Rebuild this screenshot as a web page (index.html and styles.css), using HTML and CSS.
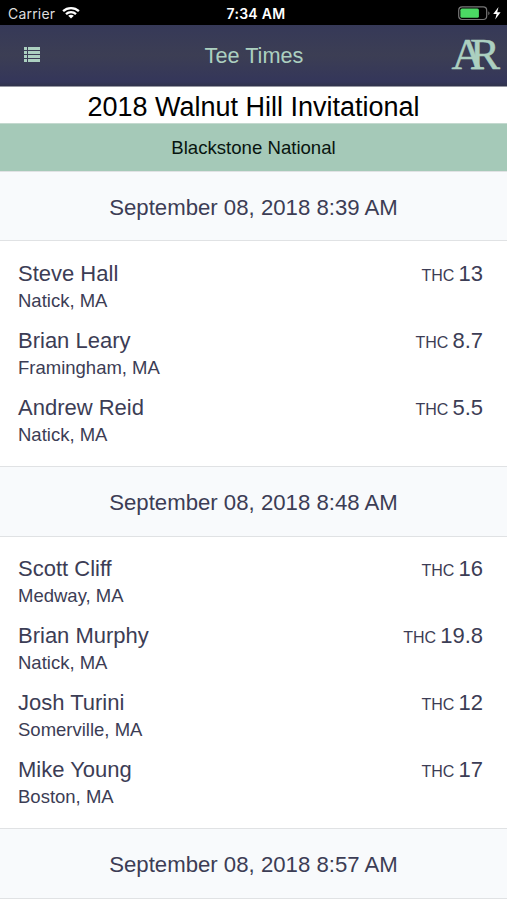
FILE: index.html
```html
<!DOCTYPE html>
<html lang="en">
<head>
<meta charset="utf-8">
<title>Tee Times</title>
<link rel="stylesheet" href="styles.css">
</head>
<body>
<div class="status">
  <div class="carrier"><span>Carrier</span>
    <svg class="wifi" width="18" height="13" viewBox="0 0 18 13"><g fill="none" stroke="#fff" stroke-width="2.3"><path d="M1.1 5.2C5.5 1 12.500 1 16.900 5.200"/><path d="M4 8.200C6.800 5.500 11.200 5.500 14 8.200"/></g><path d="M9 12.600L6.200 9.800C7.800 8.400 10.200 8.400 11.800 9.800Z" fill="#fff"/></svg>
  </div>
  <div class="clock">7:34 AM</div>
  <div class="power">
    <svg width="44" height="15" viewBox="0 0 44 15"><rect x=".7" y=".9" width="28" height="12.600" rx="3.500" fill="none" stroke="#777" stroke-width="1.200"/><rect x="2.400" y="2.600" width="18.500" height="9.200" rx="1.600" fill="#4bd964"/><path d="M30.300 5.200Q32.800 7.200 30.300 9.200Z" fill="#777"/><path d="M40.500 1L35.200 8H38.600L37.200 13.500L42.600 6.300H39.200Z" fill="#fff"/></svg>
  </div>
</div>
<header class="nav">
  <svg class="menu" width="16" height="15" viewBox="0 0 16 15" fill="#acd0c0"><path d="M0 0H3V3H0ZM4 0H16V3H4ZM0 4H3V7H0ZM4 4H16V7H4ZM0 8H3V11H0ZM4 8H16V11H4ZM0 12H3V15H0ZM4 12H16V15H4Z"/></svg>
  <h1>Tee Times</h1>
  <div class="logo"><span>A</span><span>R</span></div>
</header>
<h2 class="event">2018 Walnut Hill Invitational</h2>
<div class="course">Blackstone National</div>

<h3 class="time first">September 08, 2018 8:39 AM</h3>
<ul class="group">
  <li><div><div class="name">Steve Hall</div><div class="city">Natick, MA</div></div><div class="thc"><small>THC</small> 13</div></li>
  <li><div><div class="name">Brian Leary</div><div class="city">Framingham, MA</div></div><div class="thc"><small>THC</small> 8.7</div></li>
  <li><div><div class="name">Andrew Reid</div><div class="city">Natick, MA</div></div><div class="thc"><small>THC</small> 5.5</div></li>
</ul>
<h3 class="time">September 08, 2018 8:48 AM</h3>
<ul class="group">
  <li><div><div class="name">Scott Cliff</div><div class="city">Medway, MA</div></div><div class="thc"><small>THC</small> 16</div></li>
  <li><div><div class="name">Brian Murphy</div><div class="city">Natick, MA</div></div><div class="thc"><small>THC</small> 19.8</div></li>
  <li><div><div class="name">Josh Turini</div><div class="city">Somerville, MA</div></div><div class="thc"><small>THC</small> 12</div></li>
  <li><div><div class="name">Mike Young</div><div class="city">Boston, MA</div></div><div class="thc"><small>THC</small> 17</div></li>
</ul>
<h3 class="time">September 08, 2018 8:57 AM</h3>
</body>
</html>
```
FILE: styles.css
```css
* { box-sizing: border-box; }
body {
  margin: 0;
  height: 900px;
  overflow: hidden;
  background: #fff;
  color: #3c3d55;
  font-family: "Liberation Sans", Arial, sans-serif;
}
h1, h2, h3, ul { margin: 0; padding: 0; font-weight: 400; list-style: none; }
.status {
  display: grid;
  grid-template-columns: 1fr auto 1fr;
  align-items: center;
  height: 25px;
  padding: 2px 5px 0 8px;
  background: #000;
  color: #fff;
  font-family: Inter, sans-serif;
  font-size: 14px;
}
.carrier { display: flex; align-items: center; gap: 7px; color: #ddd; letter-spacing: .2px; }
.wifi { margin-top: -2px; }
.clock { font-weight: 600; letter-spacing: .3px; padding-left: 2px; }
.power { display: flex; justify-content: flex-end; }
.nav {
  display: grid;
  grid-template-columns: 1fr auto 1fr;
  align-items: center;
  height: 62px;
  padding: 0 7px 0 24px;
  background: linear-gradient(#363958, #3c3e54 50%, #34365a 93%, #30334c);
  border-bottom: 1px solid #9697a2;
  color: #acd0c0;
}
.nav h1 { font-size: 21.7px; margin-left: -16px; }
.menu { margin-top: -2px; }
.logo {
  justify-self: end;
  font-family: "Liberation Serif", serif;
  font-size: 45px;
  line-height: 59px;
  height: 61px;
  -webkit-text-stroke: .5px #acd0c0;
}
.logo span + span { margin-left: -14px; }
.event { height: 36px; line-height: 40px; font-size: 27px; text-align: center; color: #000; }
.course {
  height: 48px;
  line-height: 48px;
  font-size: 18.6px;
  text-align: center;
  color: #08150f;
  background: #a5c9b8;
  border-top: 1px solid #c4d9cf;
}
.time {
  height: 71px;
  line-height: 72px;
  font-size: 22.2px;
  text-align: center;
  background: #f8fafc;
  border-top: 1px solid #e0e2e4;
  border-bottom: 1px solid #e0e2e4;
}
.time.first { height: 70px; line-height: 71px; }
.group { height: 225px; padding: 18px 24px 0 18px; }
.group + .time + .group { height: 291px; padding-top: 17px; }
.group li { display: flex; justify-content: space-between; height: 67px; }
.name, .thc { font-size: 22px; line-height: 29px; }
.city { font-size: 18.5px; line-height: 25px; }
.thc small { font-size: 16px; margin-right: -2px; }
```
